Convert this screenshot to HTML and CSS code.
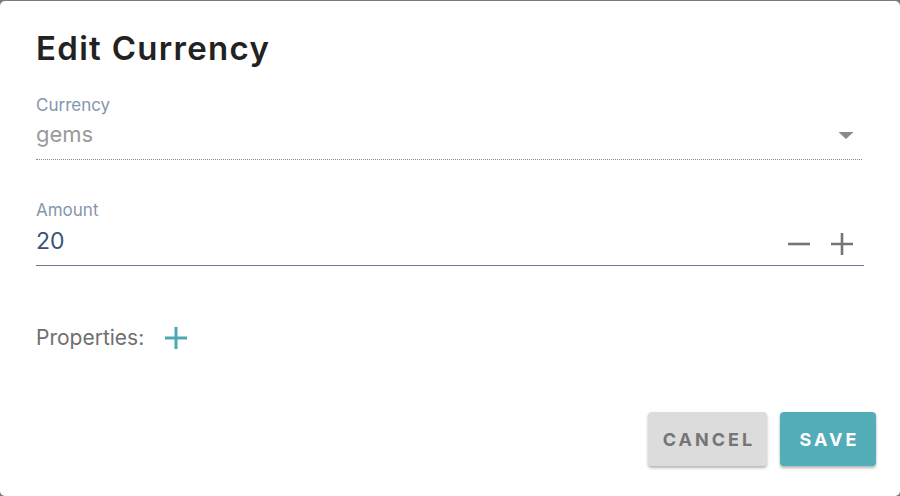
FILE: index.html
```html
<!DOCTYPE html>
<html>
<head>
<meta charset="utf-8">
<link rel="stylesheet" href="styles.css">
</head>
<body>
<div class="dialog">
  <h1 class="title">Edit Currency</h1>
  <div class="field">
    <div class="label">Currency</div>
    <div class="control select">
      <span class="value muted">gems</span>
      <svg class="caret" width="16" height="8" viewBox="0 0 16 8"><path d="M0.5 0h15L8 7z" fill="#8a8a8a"/></svg>
    </div>
  </div>
  <div class="field amount">
    <div class="label">Amount</div>
    <div class="control number">
      <span class="value">20</span>
      <div class="steppers">
        <svg width="22" height="22" viewBox="0 0 22 22"><path d="M0 11h22" stroke="#757575" stroke-width="2.6"/></svg>
        <svg width="22" height="22" viewBox="0 0 22 22"><path d="M0 11h22M11 0v22" stroke="#757575" stroke-width="2.6"/></svg>
      </div>
    </div>
  </div>
  <div class="props">
    <span>Properties:</span>
    <svg width="22" height="22" viewBox="0 0 22 22"><path d="M0 11h22M11 0v22" stroke="#4aa9b5" stroke-width="3"/></svg>
  </div>
  <div class="actions">
    <button class="btn cancel">CANCEL</button>
    <button class="btn save">SAVE</button>
  </div>
</div>
</body>
</html>
```
FILE: styles.css
```css
html, body {
  margin: 0;
  padding: 0;
  background: #7a7a7a;
}
body {
  width: 900px;
  height: 496px;
  padding-top: 1px;
  box-sizing: border-box;
  font-family: Inter, "Noto Sans", sans-serif;
}
.dialog {
  box-sizing: border-box;
  width: 900px;
  height: 495px;
  background: #fff;
  border-radius: 5px;
  padding: 25px 36px 0 36px;
  display: flex;
  flex-direction: column;
}
.title {
  margin: 0;
  font-size: 33px;
  font-weight: 600;
  color: #222;
  line-height: 44px;
  letter-spacing: 1.3px;
}
.field {
  margin-top: 27px;
  width: 826px;
}
.label {
  font-size: 17px;
  color: #8496ad;
  line-height: 17px;
}
.control {
  display: flex;
  align-items: flex-start;
  justify-content: space-between;
}
.select {
  height: 45px;
  border-bottom: 1px dotted #8a8a8a;
}
.value {
  font-size: 22px;
  color: #3e5373;
  line-height: 20px;
  margin-top: 10px;
}
.muted { color: #9a9a9a; }
.caret { margin-right: 8px; margin-top: 18px; }
.amount { margin-top: 42px; width: 828px; }
.number {
  height: 46px;
  border-bottom: 1px solid #6b7c93;
}
.number .value { font-size: 23px; margin-top: 12px; }
.steppers {
  display: flex;
  gap: 21px;
  margin-right: 11px;
  margin-top: 14px;
}
.props {
  margin-top: 60px;
  display: flex;
  align-items: flex-start;
  gap: 21px;
  font-size: 21px;
  line-height: 24px;
  color: #6f6f6f;
}
.props svg { margin-top: 1px; }
.actions {
  margin-top: auto;
  margin-bottom: 30px;
  margin-right: -12px;
  display: flex;
  justify-content: flex-end;
  gap: 13px;
}
.btn {
  border: none;
  border-radius: 4px;
  height: 54px;
  font-family: Inter, "Noto Sans", sans-serif;
  font-weight: 700;
  font-size: 18px;
  letter-spacing: 3px;
  box-shadow: 0 2px 3px rgba(0,0,0,0.3);
  padding: 0 0 0 3px;
}
.cancel {
  width: 119px;
  background: #dcdcdc;
  color: #757575;
}
.save {
  width: 96px;
  background: #52adb8;
  color: #fff;
}
```
